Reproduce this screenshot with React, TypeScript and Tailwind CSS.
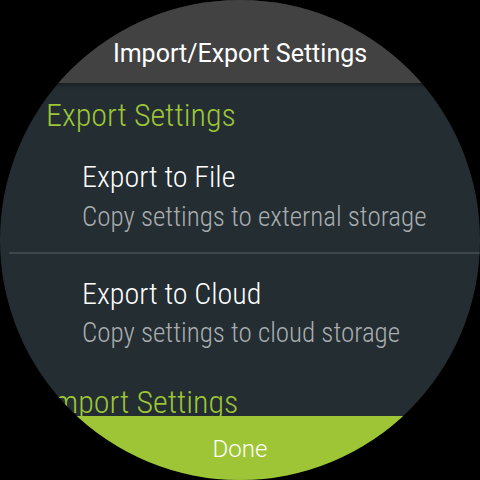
import React from "react";

export default function App() {
  return (
    <div className="w-[480px] h-[480px] bg-black" style={{ fontFamily: "Roboto, 'Noto Sans', sans-serif" }}>
      <div className="relative w-[480px] h-[480px] rounded-full overflow-hidden bg-[#232d32] flex flex-col">
        {/* header */}
        <div className="relative z-10 h-[83px] shrink-0 bg-[#424242] flex items-end justify-center shadow-[0_2px_4px_rgba(0,0,0,0.35)]">
          <span className="text-white text-[25px] leading-[25px] mb-[17px]">Import/Export Settings</span>
        </div>

        {/* list */}
        <div className="flex-1 overflow-hidden flex flex-col whitespace-nowrap font-light [font-stretch:87.5%]">
          <div className="mt-[16px] pl-[46px] h-[32px] text-[32px] leading-[32px] text-[#9dc535]">Export Settings</div>

          <div className="mt-[31px] pl-[82px] h-[30px] text-[30px] leading-[30px] text-white">Export to File</div>
          <div className="mt-[12px] pl-[82px] h-[27px] text-[27px] leading-[27px] text-[#a9adaf]">
            Copy settings to external storage
          </div>

          <div className="mt-[21px] ml-[9px] h-[2px] bg-[#3b474c]" />

          <div className="mt-[25px] pl-[82px] h-[30px] text-[30px] leading-[30px] text-white">Export to Cloud</div>
          <div className="mt-[11px] pl-[82px] h-[27px] text-[27px] leading-[27px] text-[#a9adaf]">
            Copy settings to cloud storage
          </div>

          <div className="mt-[39px] pl-[46px] h-[32px] text-[32px] leading-[32px] text-[#9dc535]">Import Settings</div>
        </div>

        {/* done */}
        <div className="absolute left-0 right-0 bottom-0 h-[64px] bg-[#9dc535] flex justify-center">
          <span className="mt-[21px] text-white text-[24px] leading-[24px] font-light">Done</span>
        </div>
      </div>
    </div>
  );
}
